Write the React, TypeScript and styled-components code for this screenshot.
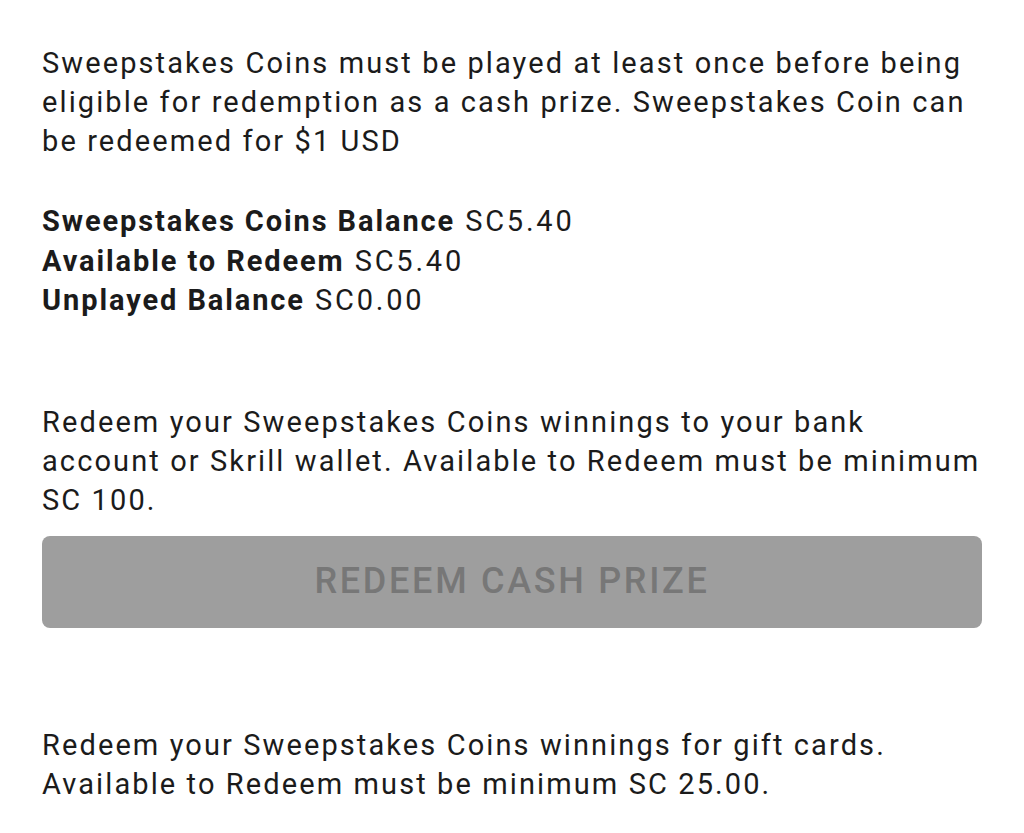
import React from 'react'
import styled, { createGlobalStyle } from 'styled-components'

const GlobalStyle = createGlobalStyle`
  html, body {
    margin: 0;
    padding: 0;
    background: #ffffff;
  }
  body {
    font-family: Roboto, "Liberation Sans", sans-serif;
    color: #1b1b1b;
    -webkit-font-smoothing: antialiased;
  }
`

const Page = styled.div`
  display: flex;
  flex-direction: column;
  padding: 44px 42px 0 42px;
`

const Paragraph = styled.p<{ $gapAfter?: number }>`
  margin: 0 0 ${p => p.$gapAfter ?? 0}px 0;
  font-size: 29px;
  line-height: 39px;
  letter-spacing: 2.1px;
`

const BalanceList = styled.div<{ $gapAfter?: number }>`
  display: flex;
  flex-direction: column;
  margin-bottom: ${p => p.$gapAfter ?? 0}px;
`

const BalanceRow = styled.div`
  font-size: 29px;
  line-height: 39.5px;
  letter-spacing: 2.8px;
`

const Label = styled.span`
  font-weight: 700;
  letter-spacing: 1.9px;
`

const RedeemButton = styled.button`
  display: flex;
  align-items: center;
  justify-content: center;
  width: 100%;
  height: 92px;
  margin: 16px 0 98px 0;
  padding: 0 0 2px 0;
  border: none;
  border-radius: 8px;
  background: #9e9e9e;
  color: #777777;
  font-family: Roboto, "Liberation Sans", sans-serif;
  font-size: 36px;
  font-weight: 500;
  letter-spacing: 2.7px;
  text-transform: uppercase;
  cursor: not-allowed;
`

const balances = [
  { label: 'Sweepstakes Coins Balance', value: 'SC5.40' },
  { label: 'Available to Redeem', value: 'SC5.40' },
  { label: 'Unplayed Balance', value: 'SC0.00' },
]

export default function App() {
  return (
    <>
      <GlobalStyle />
      <Page>
        <Paragraph $gapAfter={41}>
          Sweepstakes Coins must be played at least once before being eligible for redemption as a cash prize. Sweepstakes Coin can be redeemed for $1 USD
        </Paragraph>

        <BalanceList $gapAfter={82}>
          {balances.map(b => (
            <BalanceRow key={b.label}>
              <Label>{b.label}</Label> {b.value}
            </BalanceRow>
          ))}
        </BalanceList>

        <Paragraph>
          Redeem your Sweepstakes Coins winnings to your bank account or Skrill wallet. Available to Redeem must be minimum SC 100.
        </Paragraph>

        <RedeemButton disabled>Redeem Cash Prize</RedeemButton>

        <Paragraph>
          Redeem your Sweepstakes Coins winnings for gift cards.
          <br />
          Available to Redeem must be minimum SC 25.00.
        </Paragraph>
      </Page>
    </>
  )
}
